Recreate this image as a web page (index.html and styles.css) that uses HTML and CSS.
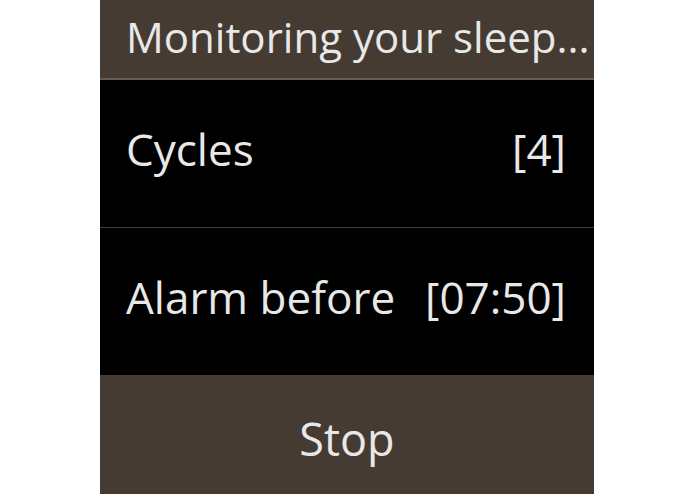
FILE: index.html
```html
<!DOCTYPE html>
<html>
<head>
<meta charset="utf-8">
<link rel="stylesheet" href="styles.css">
</head>
<body>
<div class="screen">
  <div class="header">Monitoring your sleep...</div>
  <div class="row">
    <span class="label">Cycles</span>
    <span class="value">[4]</span>
  </div>
  <div class="divider"></div>
  <div class="row">
    <span class="label">Alarm before</span>
    <span class="value">[07:50]</span>
  </div>
  <div class="button">Stop</div>
</div>
</body>
</html>
```

FILE: styles.css
```css
html, body {
  margin: 0;
  padding: 0;
  background: #ffffff;
}
body {
  width: 695px;
  height: 494px;
  display: flex;
  justify-content: center;
  font-family: "Open Sans", "Noto Sans", sans-serif;
  overflow: hidden;
}
.screen {
  width: 494px;
  height: 494px;
  margin-left: -1px;
  background: #000;
  display: flex;
  flex-direction: column;
  color: #e8e8e8;
}
.header {
  height: 78px;
  background: #463b33;
  border-bottom: 2px solid #6a5a4b;
  font-size: 42px;
  line-height: 74px;
  padding-left: 26px;
  white-space: nowrap;
  overflow: hidden;
}
.row {
  height: 147px;
  box-sizing: border-box;
  display: flex;
  align-items: center;
  justify-content: space-between;
  padding: 0 28px 10px 26px;
  font-size: 44px;
}
.divider {
  height: 1px;
  background: #3c3c3c;
}
.button {
  flex: 1;
  background: #463b33;
  display: flex;
  align-items: center;
  justify-content: center;
  padding-top: 8px;
  font-size: 45px;
}
```
